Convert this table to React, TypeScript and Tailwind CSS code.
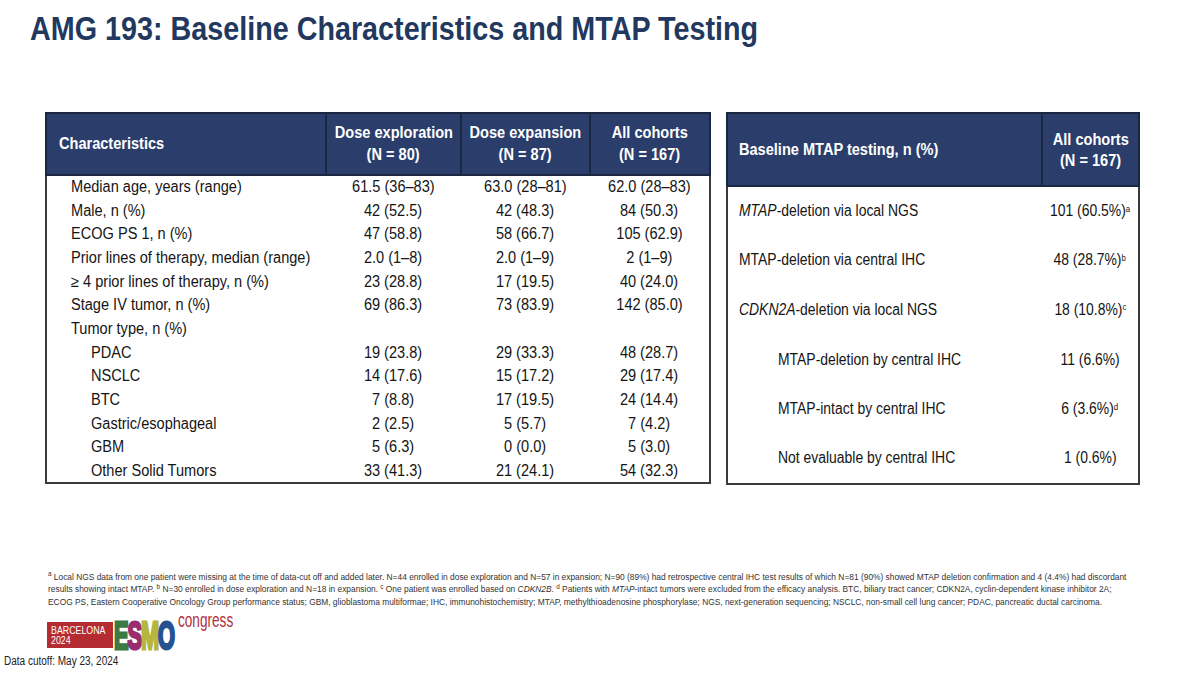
import type { ReactNode } from "react";

const arial = "font-['Liberation_Sans',Arial,sans-serif]";

// no narrow face installed, so squeeze the Arial glyphs instead
function Narrow({ children, left }: { children: ReactNode; left?: boolean }) {
  return (
    <span className={`inline-block whitespace-nowrap scale-x-[0.91] ${left ? "origin-left" : "origin-center"}`}>
      {children}
    </span>
  );
}

type Row = { label: string; indent?: boolean; values?: [string, string, string] };

const rows: Row[] = [
  { label: "Median age, years (range)", values: ["61.5 (36–83)", "63.0 (28–81)", "62.0 (28–83)"] },
  { label: "Male, n (%)", values: ["42 (52.5)", "42 (48.3)", "84 (50.3)"] },
  { label: "ECOG PS 1, n (%)", values: ["47 (58.8)", "58 (66.7)", "105 (62.9)"] },
  { label: "Prior lines of therapy, median (range)", values: ["2.0 (1–8)", "2.0 (1–9)", "2 (1–9)"] },
  { label: "≥ 4 prior lines of therapy, n (%)", values: ["23 (28.8)", "17 (19.5)", "40 (24.0)"] },
  { label: "Stage IV tumor, n (%)", values: ["69 (86.3)", "73 (83.9)", "142 (85.0)"] },
  { label: "Tumor type, n (%)" },
  { label: "PDAC", indent: true, values: ["19 (23.8)", "29 (33.3)", "48 (28.7)"] },
  { label: "NSCLC", indent: true, values: ["14 (17.6)", "15 (17.2)", "29 (17.4)"] },
  { label: "BTC", indent: true, values: ["7 (8.8)", "17 (19.5)", "24 (14.4)"] },
  { label: "Gastric/esophageal", indent: true, values: ["2 (2.5)", "5 (5.7)", "7 (4.2)"] },
  { label: "GBM", indent: true, values: ["5 (6.3)", "0 (0.0)", "5 (3.0)"] },
  { label: "Other Solid Tumors", indent: true, values: ["33 (41.3)", "21 (24.1)", "54 (32.3)"] },
];

const headCell = "border-2 border-[#1b2640] text-center";

function CharacteristicsTable() {
  return (
    <table className="w-[666px] shrink-0 table-fixed border-collapse border-2 border-[#3a3a3a] text-[#151515]">
      <thead>
        <tr className="h-[62px] bg-[#2b3e6b] text-[16px] font-bold leading-[22px] text-white">
          <th className="w-[280px] border-2 border-[#1b2640] pl-[12px] text-left">
            <Narrow left>Characteristics</Narrow>
          </th>
          <th className={`w-[135px] ${headCell}`}>
            <Narrow>Dose exploration</Narrow>
            <br />
            <Narrow>(N = 80)</Narrow>
          </th>
          <th className={`w-[129px] ${headCell}`}>
            <Narrow>Dose expansion</Narrow>
            <br />
            <Narrow>(N = 87)</Narrow>
          </th>
          <th className={headCell}>
            <Narrow>All cohorts</Narrow>
            <br />
            <Narrow>(N = 167)</Narrow>
          </th>
        </tr>
      </thead>
      <tbody className="text-[16px] leading-[20px]">
        {rows.map((r) => (
          <tr key={r.label} className="h-[23.7px]">
            <td className={r.indent ? "pl-[44px]" : "pl-[24px]"}>
              <Narrow left>{r.label}</Narrow>
            </td>
            {r.values ? (
              r.values.map((v, j) => (
                <td key={j} className="text-center">
                  <Narrow>{v}</Narrow>
                </td>
              ))
            ) : (
              <>
                <td />
                <td />
                <td />
              </>
            )}
          </tr>
        ))}
      </tbody>
    </table>
  );
}

type MRow = { label: ReactNode; value: string; sup?: string; indent?: boolean };

const mtapRows: MRow[] = [
  { label: <><i>MTAP</i>-deletion via local NGS</>, value: "101 (60.5%)", sup: "a" },
  { label: "MTAP-deletion via central IHC", value: "48 (28.7%)", sup: "b" },
  { label: <><i>CDKN2A</i>-deletion via local NGS</>, value: "18 (10.8%)", sup: "c" },
  { label: "MTAP-deletion by central IHC", value: "11 (6.6%)", indent: true },
  { label: "MTAP-intact by central IHC", value: "6 (3.6%)", sup: "d", indent: true },
  { label: "Not evaluable by central IHC", value: "1 (0.6%)", indent: true },
];

function MtapTable() {
  return (
    <table className="w-[414px] shrink-0 table-fixed border-collapse border-2 border-[#3a3a3a] text-[#151515]">
      <thead>
        <tr className="h-[73px] bg-[#2b3e6b] text-[16px] font-bold leading-[21px] text-white">
          <th className="w-[315px] border-2 border-[#1b2640] pl-[11px] text-left">
            <Narrow left>Baseline MTAP testing, n (%)</Narrow>
          </th>
          <th className={headCell}>
            <Narrow>All cohorts</Narrow>
            <br />
            <Narrow>(N = 167)</Narrow>
          </th>
        </tr>
      </thead>
      <tbody className="text-[16px] leading-[20px]">
        {mtapRows.map((r, i) => (
          <tr key={i} className="h-[49.6px]">
            <td className={r.indent ? "pl-[50px]" : "pl-[11px]"}>
              <span className="inline-block origin-left scale-x-[0.87] whitespace-nowrap">{r.label}</span>
            </td>
            <td className="text-center">
              <span className="inline-block scale-x-[0.87] whitespace-nowrap">
                {r.value}
                {r.sup && <sup className="text-[9px]">{r.sup}</sup>}
              </span>
            </td>
          </tr>
        ))}
      </tbody>
    </table>
  );
}

const esmoLetter = "[-webkit-text-stroke:3px_currentColor]";

function EsmoLogo() {
  return (
    <div className="flex h-[42px] items-start">
      <div className="mt-[10px] flex h-[26px] w-[66px] flex-col justify-center bg-[#b52b32] pl-[4px] text-[10.5px] leading-[10px] text-white">
        <span className="inline-block origin-left scale-x-[0.84] whitespace-nowrap">BARCELONA</span>
        <span className="inline-block origin-left scale-x-[0.84]">2024</span>
      </div>
      <div className="mt-[4px] w-[65px] pl-[1px]">
        <span className="inline-block origin-left scale-x-[0.56] whitespace-nowrap text-[39px] font-bold leading-none tracking-[-2px]">
          <span className={`text-[#3b7a45] ${esmoLetter}`}>E</span>
          <span className={`text-[#9a2d6e] ${esmoLetter}`}>S</span>
          <span className={`text-[#b4b63e] ${esmoLetter}`}>M</span>
          <span className={`text-[#26528f] ${esmoLetter}`}>O</span>
        </span>
      </div>
      <span className="-mt-[2px] inline-block origin-left scale-x-[0.68] whitespace-nowrap text-[20px] leading-[20px] text-[#b0303c]">
        congress
      </span>
    </div>
  );
}

export default function App() {
  return (
    <div className={`flex h-[673px] w-[1200px] flex-col overflow-hidden bg-white ${arial}`}>
      <h1 className="pl-[30px] pt-[9px] text-[34px] font-bold leading-[38px] text-[#22385e]">
        <span className="inline-block origin-left scale-x-[0.845] whitespace-nowrap">
          AMG 193: Baseline Characteristics and MTAP Testing
        </span>
      </h1>

      <div className="mt-[65px] flex items-start gap-[15px] pl-[45px]">
        <CharacteristicsTable />
        <MtapTable />
      </div>

      <div className="mt-[86px] pl-[48px] text-[8.4px] leading-[12.5px] text-[#333]">
        <p className="whitespace-nowrap">
          <sup>a</sup> Local NGS data from one patient were missing at the time of data-cut off and added later. N=44 enrolled in dose exploration and N=57 in expansion; N=90 (89%) had retrospective central IHC test results of which N=81 (90%) showed MTAP deletion confirmation and 4 (4.4%) had discordant
        </p>
        <p className="whitespace-nowrap">
          results showing intact MTAP. <sup>b</sup> N=30 enrolled in dose exploration and N=18 in expansion. <sup>c</sup> One patient was enrolled based on <i>CDKN2B</i>. <sup>d</sup> Patients with <i>MTAP</i>-intact tumors were excluded from the efficacy analysis. BTC, biliary tract cancer; CDKN2A, cyclin-dependent kinase inhibitor 2A;
        </p>
        <p className="whitespace-nowrap">
          ECOG PS, Eastern Cooperative Oncology Group performance status; GBM, glioblastoma multiformae; IHC, immunohistochemistry; MTAP, methylthioadenosine phosphorylase; NGS, next-generation sequencing; NSCLC, non-small cell lung cancer; PDAC, pancreatic ductal carcinoma.
        </p>
      </div>

      <div className="mt-[4px] pl-[47px]">
        <EsmoLogo />
      </div>

      <p className="mt-0 pl-[4px] text-[12.5px] leading-[15px] text-[#222]">
        <span className="inline-block origin-left scale-x-[0.8] whitespace-nowrap">Data cutoff: May 23, 2024</span>
      </p>
    </div>
  );
}
